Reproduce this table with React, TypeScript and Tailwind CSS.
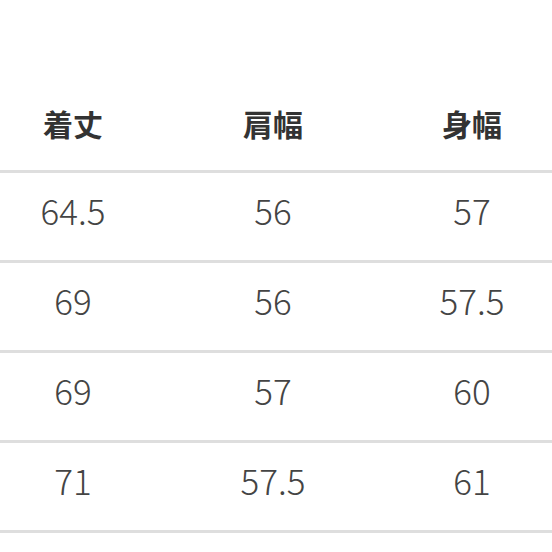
const headers = ["着丈", "肩幅", "身幅"];

const rows = [
  ["64.5", "56", "57"],
  ["69", "56", "57.5"],
  ["69", "57", "60"],
  ["71", "57.5", "61"],
];

const cols = "grid grid-cols-[146px_254px_144px]";

export default function App() {
  return (
    <div className="h-[552px] w-[552px] overflow-hidden bg-white font-['Noto_Sans_CJK_JP','Noto_Sans',sans-serif]">
      <div className={`${cols} h-[173px] items-end border-b-[3px] border-[#dedede] pb-[32px]`}>
        {headers.map((h) => (
          <div key={h} className="text-center text-[30px] font-bold leading-none text-[#333333]">
            {h}
          </div>
        ))}
      </div>
      {rows.map((r, i) => (
        <div key={i} className={`${cols} h-[90px] items-center border-b-[3px] border-[#dedede] pb-[14px]`}>
          {r.map((v, j) => (
            <div key={j} className="text-center text-[35px] font-light leading-none text-[#444444]">
              {v}
            </div>
          ))}
        </div>
      ))}
    </div>
  );
}
